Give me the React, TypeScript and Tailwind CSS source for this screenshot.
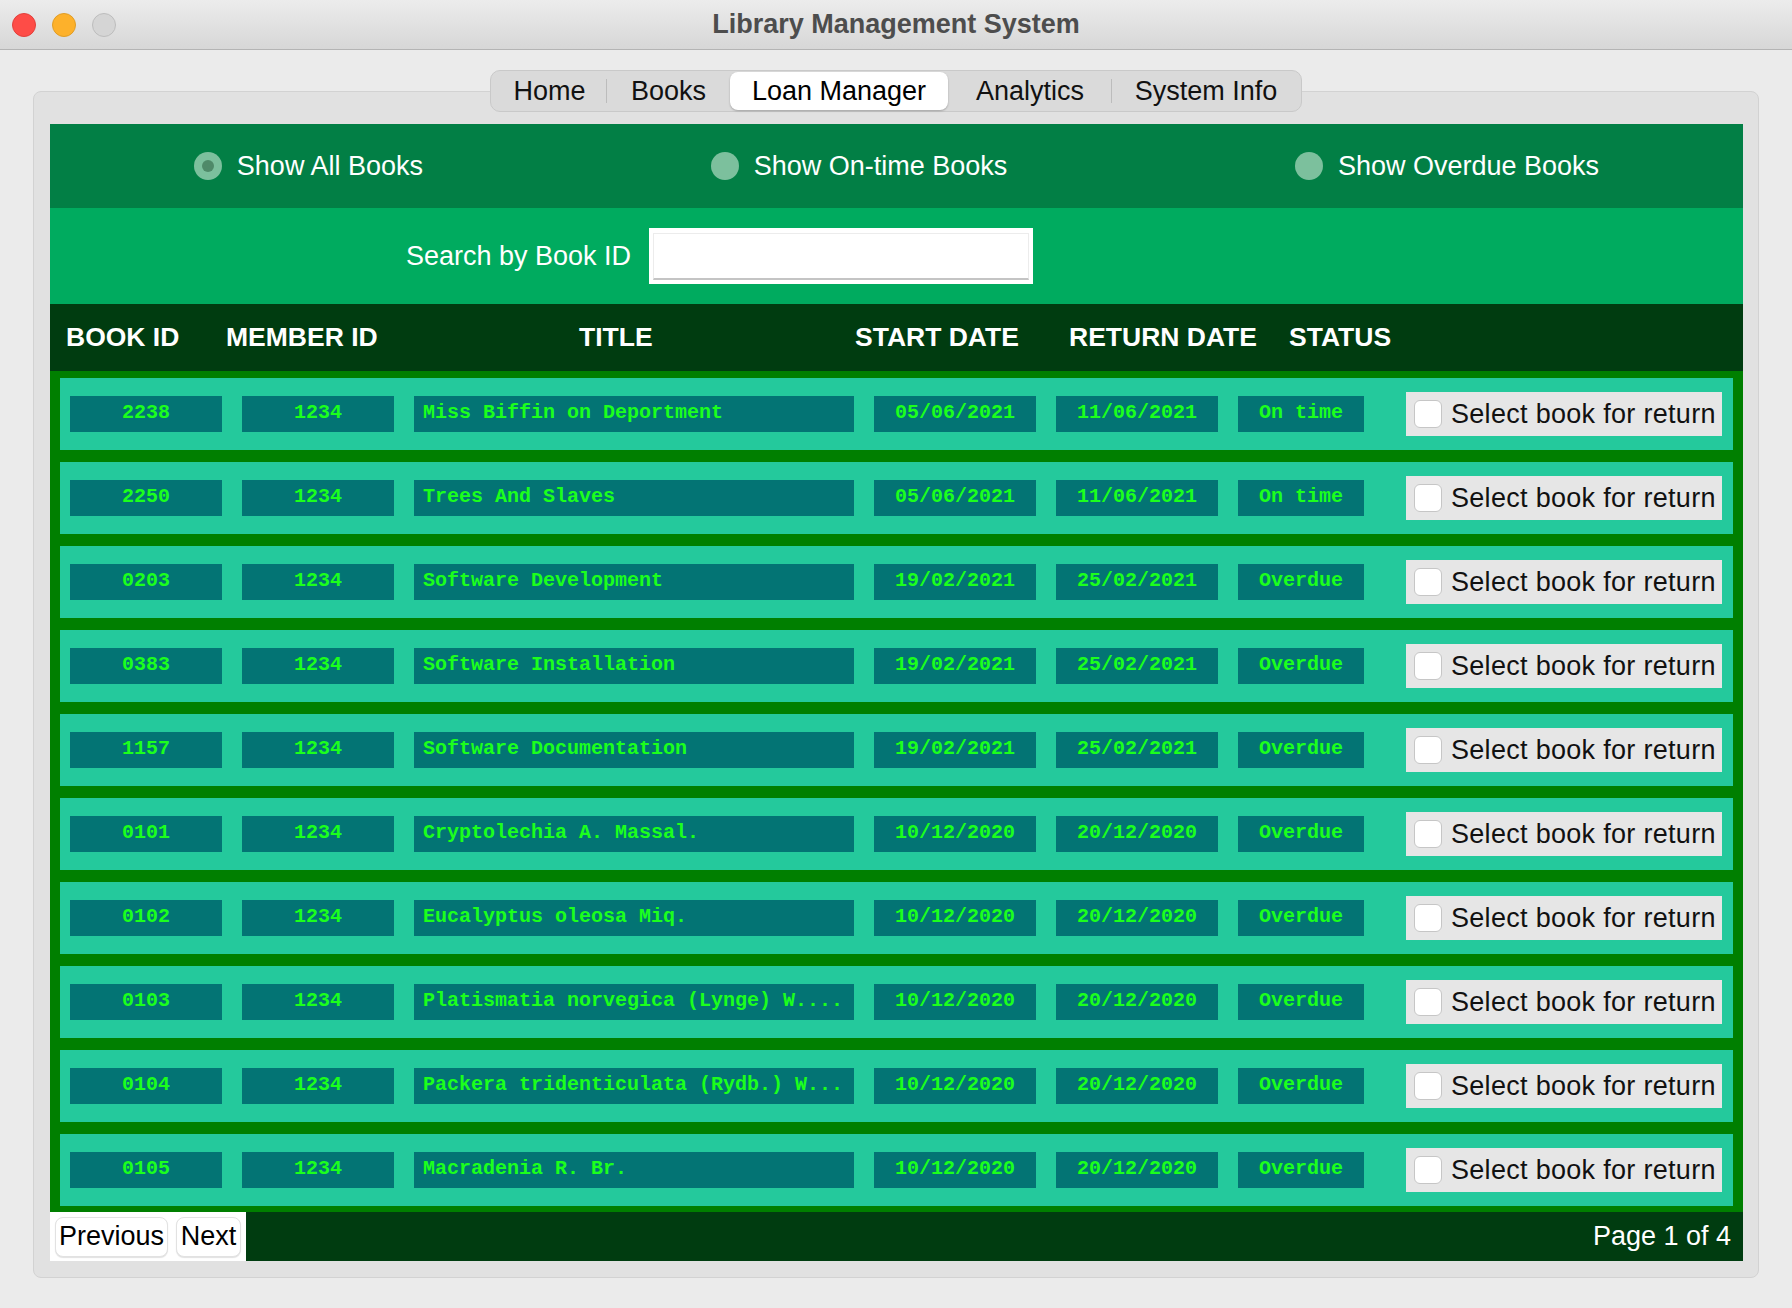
import { useState } from 'react';

type Loan = {
  bookId: string;
  memberId: string;
  title: string;
  start: string;
  ret: string;
  status: string;
};

const LOANS: Loan[] = [
  { bookId: '2238', memberId: '1234', title: 'Miss Biffin on Deportment', start: '05/06/2021', ret: '11/06/2021', status: 'On time' },
  { bookId: '2250', memberId: '1234', title: 'Trees And Slaves', start: '05/06/2021', ret: '11/06/2021', status: 'On time' },
  { bookId: '0203', memberId: '1234', title: 'Software Development', start: '19/02/2021', ret: '25/02/2021', status: 'Overdue' },
  { bookId: '0383', memberId: '1234', title: 'Software Installation', start: '19/02/2021', ret: '25/02/2021', status: 'Overdue' },
  { bookId: '1157', memberId: '1234', title: 'Software Documentation', start: '19/02/2021', ret: '25/02/2021', status: 'Overdue' },
  { bookId: '0101', memberId: '1234', title: 'Cryptolechia A. Massal.', start: '10/12/2020', ret: '20/12/2020', status: 'Overdue' },
  { bookId: '0102', memberId: '1234', title: 'Eucalyptus oleosa Miq.', start: '10/12/2020', ret: '20/12/2020', status: 'Overdue' },
  { bookId: '0103', memberId: '1234', title: 'Platismatia norvegica (Lynge) W....', start: '10/12/2020', ret: '20/12/2020', status: 'Overdue' },
  { bookId: '0104', memberId: '1234', title: 'Packera tridenticulata (Rydb.) W...', start: '10/12/2020', ret: '20/12/2020', status: 'Overdue' },
  { bookId: '0105', memberId: '1234', title: 'Macradenia R. Br.', start: '10/12/2020', ret: '20/12/2020', status: 'Overdue' },
];

const TABS = [
  { label: 'Home', w: 'w-[115px]' },
  { label: 'Books', w: 'w-[123px]' },
  { label: 'Loan Manager', w: 'w-[218px]' },
  { label: 'Analytics', w: 'w-[164px]' },
  { label: 'System Info', w: 'w-[188px]' },
];

const FILTERS = ['Show All Books', 'Show On-time Books', 'Show Overdue Books'];

function Radio({ checked }: { checked: boolean }) {
  return (
    <span className="w-[28px] h-[28px] rounded-full bg-[#7cc09d] flex items-center justify-center shrink-0">
      {checked && <span className="w-[12px] h-[12px] rounded-full bg-[#4f8a69]" />}
    </span>
  );
}

function Cell({ w, children, left }: { w: string; children: string; left?: boolean }) {
  return (
    <div
      className={`${w} h-[36px] shrink-0 bg-[#037474] flex items-center ${left ? 'justify-start pl-[9px]' : 'justify-center'} font-['Liberation_Mono',monospace] font-bold text-[20px] text-[#1cff1c] whitespace-pre leading-none pb-[3px]`}
    >
      {children}
    </div>
  );
}

function LoanRow({ loan }: { loan: Loan }) {
  const [picked, setPicked] = useState(false);
  return (
    <div className="h-[72px] bg-[#24c99c] flex items-center px-[10px]">
      <Cell w="w-[152px]">{loan.bookId}</Cell>
      <div className="w-[20px] shrink-0" />
      <Cell w="w-[152px]">{loan.memberId}</Cell>
      <div className="w-[20px] shrink-0" />
      <Cell w="w-[440px]" left>{loan.title}</Cell>
      <div className="w-[20px] shrink-0" />
      <Cell w="w-[162px]">{loan.start}</Cell>
      <div className="w-[20px] shrink-0" />
      <Cell w="w-[162px]">{loan.ret}</Cell>
      <div className="w-[20px] shrink-0" />
      <Cell w="w-[126px]">{loan.status}</Cell>
      <label
        className="ml-[42px] w-[316px] h-[44px] bg-[#e6e6e6] flex items-center pl-[8px] gap-[9px] cursor-pointer"
        onClick={() => setPicked((p) => !p)}
      >
        <span className="w-[28px] h-[28px] rounded-[6px] bg-white border border-[#c6c6c6] shrink-0 flex items-center justify-center text-[18px] text-[#1f6fd6]">
          {picked ? '✓' : ''}
        </span>
        <span className="text-[27px] tracking-[0.3px] text-[#111] leading-none whitespace-nowrap">Select book for return</span>
      </label>
    </div>
  );
}

export default function App() {
  const [tab] = useState('Loan Manager');
  const [filter, setFilter] = useState(0);

  return (
    <div className="w-[1792px] h-[1308px] bg-[#ebebeb] flex flex-col font-['Liberation_Sans',Arial,sans-serif] overflow-hidden">
      {/* title bar */}
      <div className="h-[50px] shrink-0 grid grid-cols-[1fr_auto_1fr] items-center bg-gradient-to-b from-[#ececec] to-[#d7d7d7] border-b border-[#b4b4b4]">
        <div className="flex items-center gap-[16px] pl-[12px]">
          <span className="w-[24px] h-[24px] rounded-full bg-[#fe4c47] border border-[#e2403b]" />
          <span className="w-[24px] h-[24px] rounded-full bg-[#fdb12b] border border-[#e09d26]" />
          <span className="w-[24px] h-[24px] rounded-full bg-[#d5d5d5] border border-[#bdbdbd]" />
        </div>
        <div className="text-[27px] font-bold text-[#4d4d4d] leading-none">Library Management System</div>
        <div />
      </div>

      {/* body */}
      <div className="flex flex-col items-center pt-[20px] px-[33px]">
        <div className="relative z-10 -mb-[21px] h-[42px] flex items-center bg-[#dadada] border border-[#c9c9c9] rounded-[10px] px-[1px]">
          {TABS.map((t, i) => {
            const active = t.label === tab;
            const next = TABS[i + 1];
            const showSep = !active && next && next.label !== tab;
            return (
              <div key={t.label} className="flex items-center">
                <div
                  className={`${t.w} h-[38px] flex items-center justify-center text-[27px] leading-none ${
                    active ? 'bg-white rounded-[8px] shadow-[0_1px_2px_rgba(0,0,0,0.25)] text-black' : 'text-[#111]'
                  }`}
                >
                  {t.label}
                </div>
                {showSep && <div className="w-px h-[24px] bg-[#bcbcbc] -ml-px" />}
              </div>
            );
          })}
        </div>

        <div className="w-full h-[1187px] bg-[#e1e1e1] border border-[#d2d2d2] rounded-[8px] pt-[32px] pl-[16px] pr-[15px]">
          <div className="flex flex-col">
            {/* filter radios */}
            <div className="h-[84px] bg-[#027f45] flex items-center justify-around">
              {FILTERS.map((f, i) => (
                <button key={f} className="flex items-center gap-[15px]" onClick={() => setFilter(i)}>
                  <Radio checked={filter === i} />
                  <span className="text-[27px] text-white leading-none">{f}</span>
                </button>
              ))}
            </div>

            {/* search */}
            <div className="h-[96px] bg-[#00ab5f] flex items-center pl-[356px] gap-[18px]">
              <span className="text-[27px] text-white leading-none">Search by Book ID</span>
              <div className="w-[384px] h-[56px] bg-white px-[4px] pt-[5px] pb-[4px]">
                <div className="h-full bg-white border border-[#ececec] border-b-2 border-b-[#c4c4c4]" />
              </div>
            </div>

            {/* header */}
            <div className="h-[67px] bg-[#003c10] flex items-center pl-[16px] text-[26.5px] font-bold text-white leading-none">
              <span className="w-[160px] shrink-0">BOOK ID</span>
              <span className="w-[353px] shrink-0">MEMBER ID</span>
              <span className="w-[276px] shrink-0">TITLE</span>
              <span className="w-[214px] shrink-0">START DATE</span>
              <span className="w-[220px] shrink-0">RETURN DATE</span>
              <span>STATUS</span>
            </div>

            {/* rows */}
            <div className="bg-[#007f00] px-[10px] pt-[7px] pb-[6px] flex flex-col gap-[12px]">
              {LOANS.map((l) => (
                <LoanRow key={l.bookId} loan={l} />
              ))}
            </div>

            {/* pager */}
            <div className="h-[49px] bg-[#003c10] flex items-center justify-between pr-[12px]">
              <div className="h-full w-[196px] bg-white flex items-center pl-[5px] gap-[8px]">
                <button className="w-[113px] h-[40px] bg-white rounded-[8px] border border-[#e2e2e2] shadow-[0_1px_1px_rgba(0,0,0,0.12)] text-[27px] text-black leading-none">
                  Previous
                </button>
                <button className="w-[65px] h-[40px] bg-white rounded-[8px] border border-[#e2e2e2] shadow-[0_1px_1px_rgba(0,0,0,0.12)] text-[27px] text-black leading-none">
                  Next
                </button>
              </div>
              <span className="text-[27px] text-white leading-none">Page 1 of 4</span>
            </div>
          </div>
        </div>
      </div>
    </div>
  );
}
